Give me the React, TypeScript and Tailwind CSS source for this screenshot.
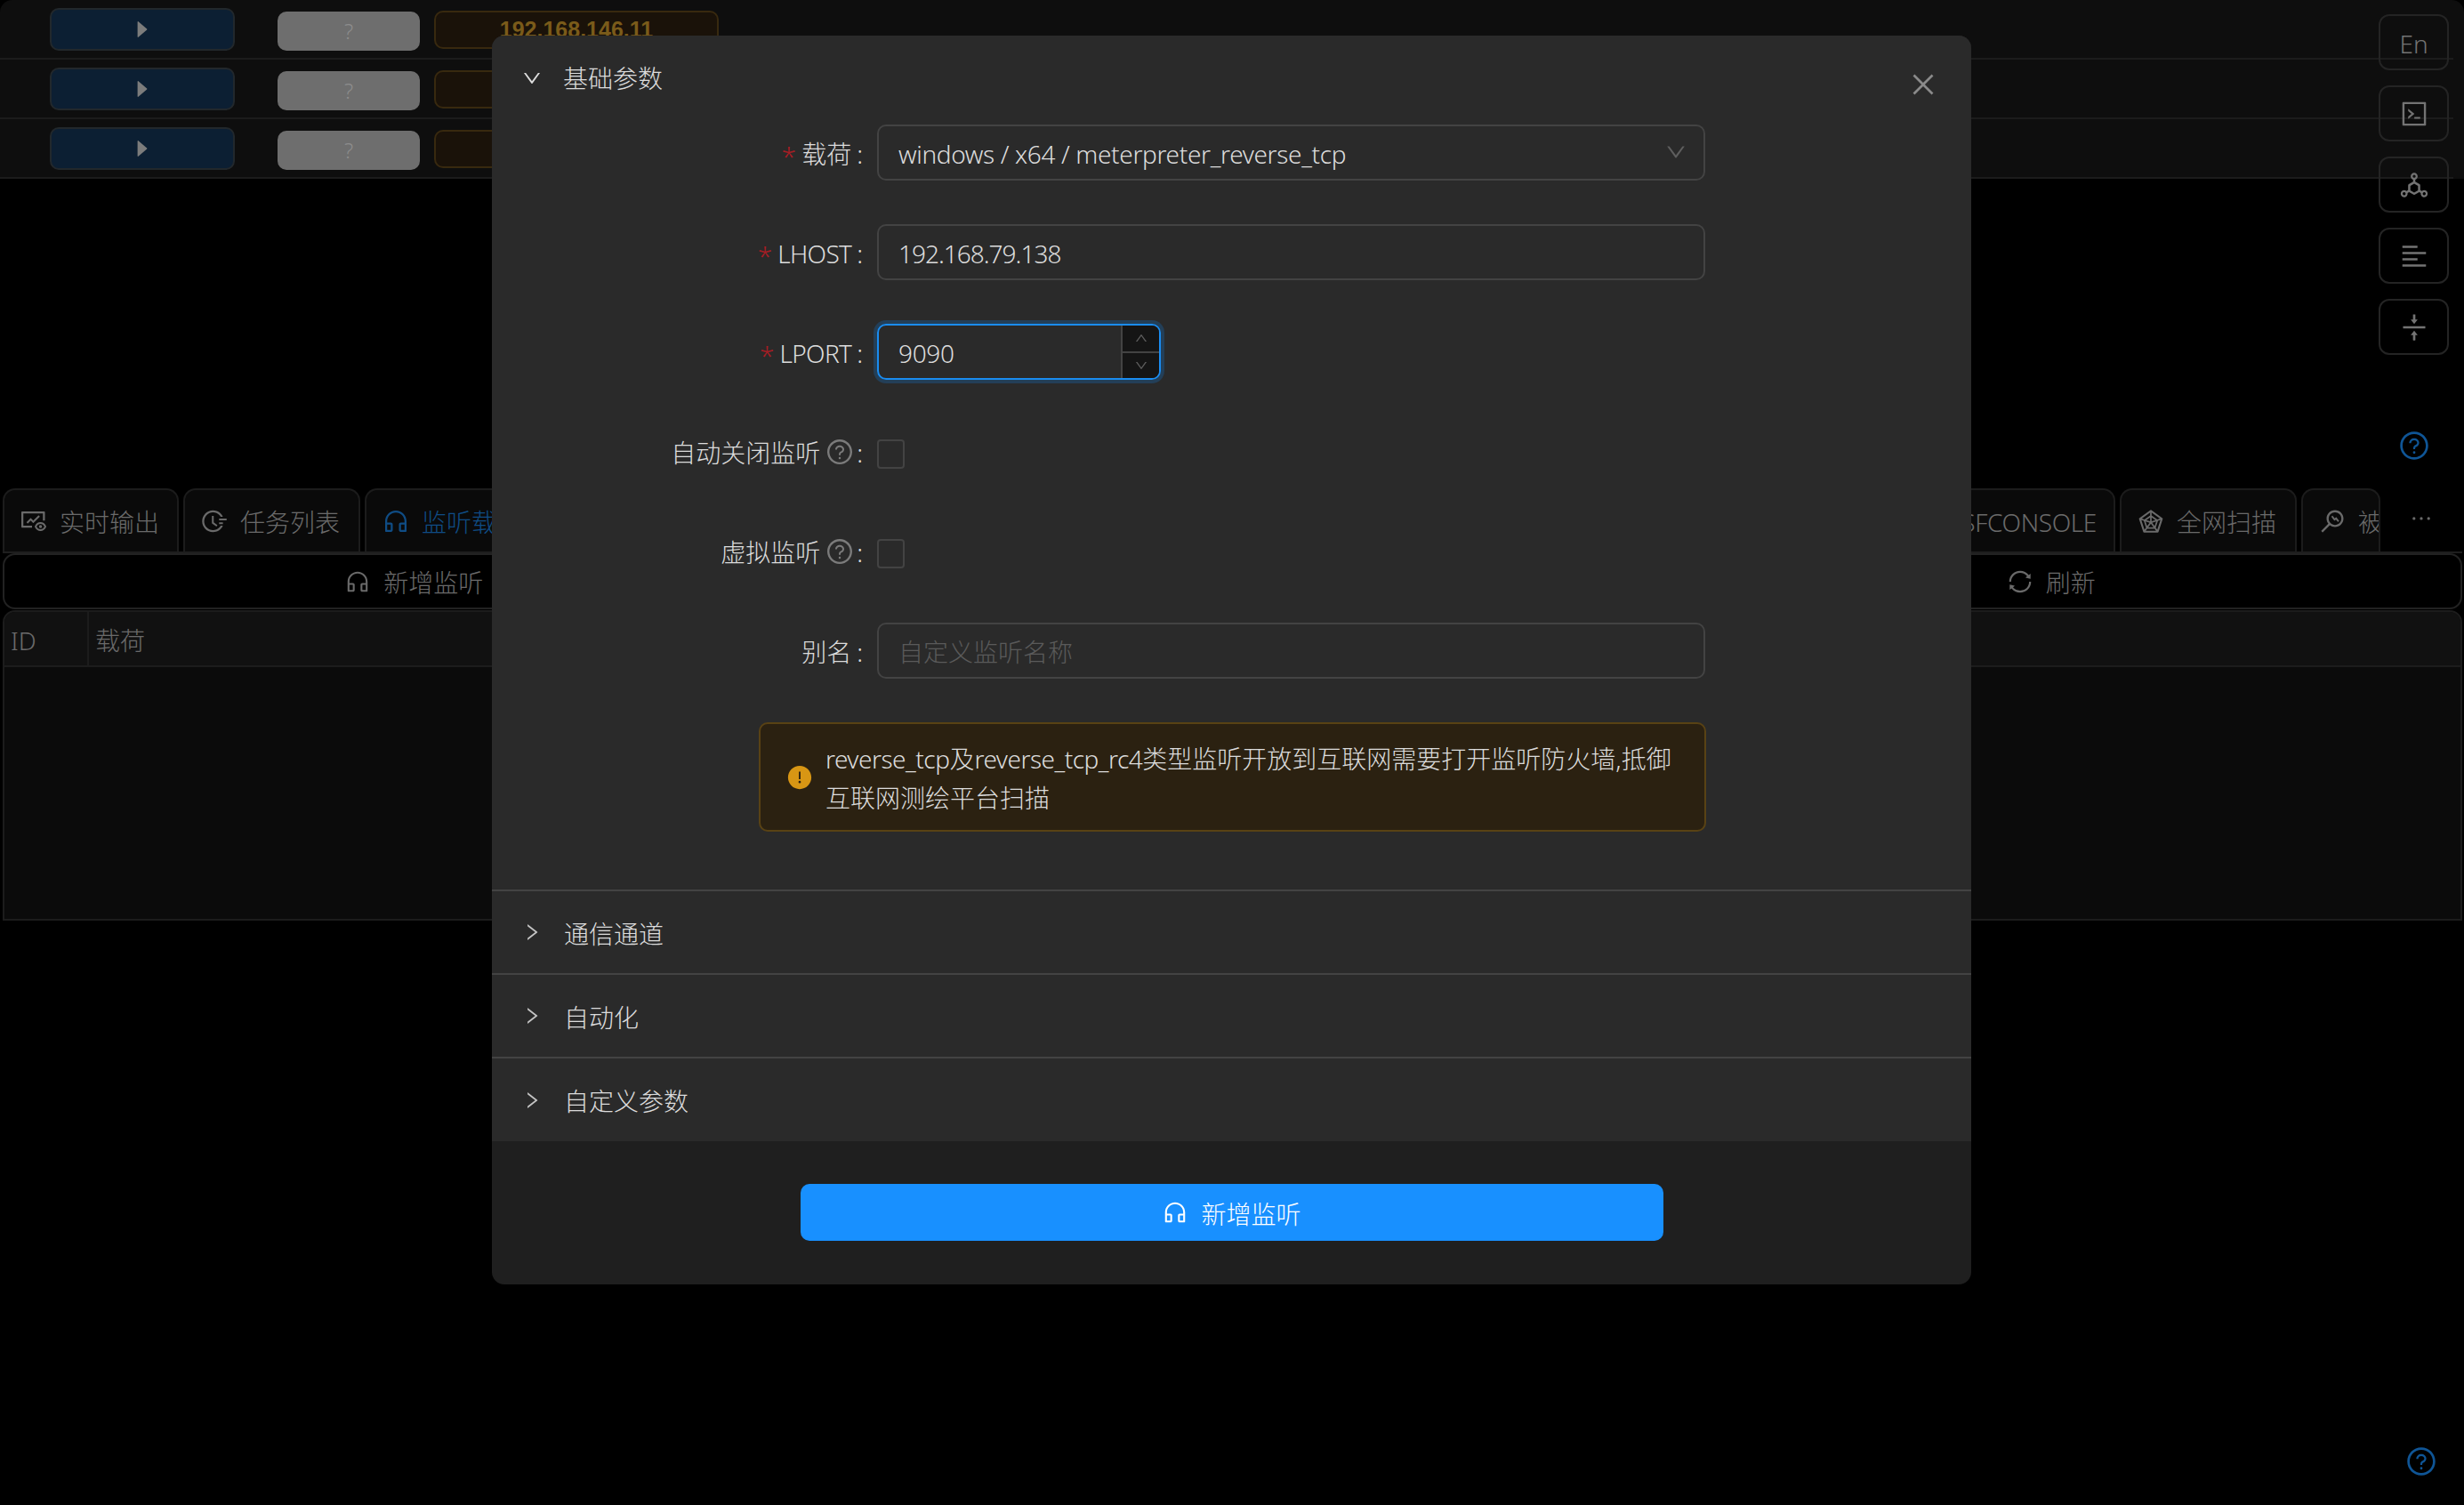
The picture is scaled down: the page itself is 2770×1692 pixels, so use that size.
import React from "react";
import {
  AiOutlineCustomerService, AiOutlineDown, AiOutlineRight, AiOutlineClose, AiOutlineUp,
  AiOutlineQuestionCircle, AiOutlineSync, AiOutlineCode, AiOutlineDeploymentUnit, AiOutlineAlignLeft,
  AiOutlineVerticalAlignMiddle, AiOutlineRadarChart, AiOutlineMonitor, AiOutlineFundView,
  AiOutlineFieldTime, AiFillCaretRight, AiFillExclamationCircle, AiOutlineEllipsis,
} from "react-icons/ai";

const LAT = "tracking-[-0.35px]";
const LAT2 = "tracking-[-0.7px]";
const LAT3 = "tracking-[-1px]";

function BgRow() {
  return (
    <div className="flex items-start h-[67px] border-b-2 border-[#1c1c1c]">
      <div className="ml-[56px] mt-[9px] w-[208px] h-[48px] rounded-[10px] border-2 border-[#22282c] bg-[#0c1f33] flex items-center justify-center">
        <AiFillCaretRight className="text-[26px] text-[#7c7c7c]" />
      </div>
      <div className="ml-[48px] mt-[13px] w-[160px] h-[44px] rounded-[10px] bg-[#6e6e6e] flex items-center justify-center text-[24px] text-[#8c8c8c]">?</div>
      <div className="ml-[16px] mt-[12px] w-[320px] h-[43px] rounded-[10px] border-2 border-[#38290f] bg-[#1a1209] flex items-center justify-center font-['Liberation_Sans',sans-serif] font-bold text-[25px] text-[#7a5b1a]">192.168.146.11</div>
    </div>
  );
}

function Tab({ icon, label, w, active, end, lat }: { icon: React.ReactNode; label: string; w: string; active?: boolean; end?: boolean; lat?: boolean }) {
  return (
    <div className={`${w} shrink-0 h-[71px] rounded-t-[14px] border-2 border-b-0 border-[#1c1c1c] bg-[#0a0a0a] flex items-center gap-[13px] ${end ? "justify-end pr-[19px]" : "pl-[17px]"} overflow-hidden whitespace-nowrap text-[28px] ${active ? "text-[#0f4c84]" : "text-[#6a6a6a]"}`}>
      <span className="text-[32px] flex shrink-0">{icon}</span>
      <span className={`pt-[2px] ${lat ? LAT : ""}`}>{label}</span>
    </div>
  );
}

function SideBtn({ children }: { children: React.ReactNode }) {
  return (
    <div className="w-[79px] h-[63px] rounded-[12px] border-2 border-[#242424] flex items-center justify-center text-[#737373] text-[28px]">
      {children}
    </div>
  );
}

function FormRow({ label, required, help, lat, children }: { label: string; required?: boolean; help?: boolean; lat?: boolean; children: React.ReactNode }) {
  return (
    <div className="flex items-center h-[63px] mb-[49px]">
      <div className="w-[433px] shrink-0 flex items-center justify-end pr-[16px] text-[28px] text-[#dcdcdc]">
        {required && <span className="text-[#a61d24] mr-[6px] text-[30px] leading-none pt-[8px]">*</span>}
        <span className={`pt-[3px] ${lat ? LAT2 : ""}`}>{label}</span>
        {help && <AiOutlineQuestionCircle className="ml-[6px] text-[#7b7b7b] text-[32px]" />}
        <span className={`${help ? "ml-[3px]" : "ml-[6px]"} pt-[3px]`}>:</span>
      </div>
      {children}
    </div>
  );
}

function Input({ value, placeholder, right, tight }: { value?: string; placeholder?: string; right?: React.ReactNode; tight?: boolean }) {
  return (
    <div className="w-[931px] h-[63px] rounded-[10px] border-2 border-[#434343] flex items-center justify-between pl-[22px] pr-[18px] text-[28px]">
      <span className={`pt-[3px] ${value ? `text-[#dcdcdc] ${tight ? LAT3 : LAT}` : "text-[#5a5a5a]"}`}>{value || placeholder}</span>
      {right}
    </div>
  );
}

function Checkbox() {
  return <div className="mt-[5px] w-[31px] h-[33px] rounded-[4px] border-2 border-[#434343]" />;
}

function Section({ label, last }: { label: string; last?: boolean }) {
  return (
    <div className={`flex items-center ${last ? "h-[93px]" : "h-[94px] border-b-2 border-[#434343]"} pl-[33px] text-[28px] text-[#dcdcdc]`}>
      <AiOutlineRight className="text-[24px] text-[#c4c4c4]" />
      <span className="ml-[24px] pt-[3px]">{label}</span>
    </div>
  );
}

export default function App() {
  return (
    <div className="relative w-[2770px] h-[1692px] bg-black overflow-hidden font-['Noto_Sans','Noto_Sans_CJK_SC',sans-serif] font-light">
      <div className="h-[201px] bg-[#0e0e0e] rounded-t-[14px] pr-[12px]">
        <BgRow />
        <BgRow />
        <BgRow />
      </div>

      <div className="mt-[348px] pl-[3px] pr-[2px]">
        <div className="flex gap-[5px] border-b-2 border-[#1e1e1e] h-[73px]">
          <Tab w="w-[198px]" icon={<AiOutlineFundView />} label="实时输出" />
          <Tab w="w-[199px]" icon={<AiOutlineFieldTime />} label="任务列表" />
          <Tab w="w-[205px]" icon={<AiOutlineCustomerService />} label="监听载荷" active />
          <div className="flex-1" />
          <Tab w="w-[280px]" end lat icon={<AiOutlineCode />} label="MSFCONSOLE" />
          <Tab w="w-[199px]" icon={<AiOutlineRadarChart />} label="全网扫描" />
          <Tab w="w-[89px]" icon={<AiOutlineMonitor />} label="被动扫描" />
          <div className="w-[87px] flex items-center justify-center text-[#6a6a6a] text-[30px] pb-[4px] pr-[6px]"><AiOutlineEllipsis /></div>
        </div>
        <div className="grid grid-cols-3 h-[63px] rounded-[14px] border-2 border-[#222222] text-[28px] text-[#6a6a6a]">
          <div className="flex items-center justify-center gap-[14px]"><AiOutlineCustomerService className="text-[30px]" /><span className="pt-[3px]">新增监听</span></div>
          <div />
          <div className="flex items-center justify-center gap-[14px]"><AiOutlineSync className="text-[30px]" /><span className="pt-[3px]">刷新</span></div>
        </div>
        <div className="mt-[1px] h-[349px] rounded-t-[14px] border-2 border-[#1c1c1c] bg-[#0b0b0b] overflow-hidden">
          <div className="flex h-[62px] bg-[#111111] border-b-2 border-[#1c1c1c] text-[28px] text-[#6a6a6a] items-center">
            <div className="w-[95px] h-full border-r-2 border-[#1c1c1c] pl-[7px] pt-[3px] flex items-center">ID</div>
            <div className="pl-[7px] pt-[3px]">载荷</div>
          </div>
        </div>
      </div>

      <div className="absolute top-[16px] left-[2674px] flex flex-col gap-[17px]">
        <SideBtn><span className="pt-[3px]">En</span></SideBtn>
        <SideBtn><AiOutlineCode className="text-[34px]" /></SideBtn>
        <SideBtn><AiOutlineDeploymentUnit className="text-[36px]" /></SideBtn>
        <SideBtn><AiOutlineAlignLeft className="text-[34px]" /></SideBtn>
        <SideBtn><AiOutlineVerticalAlignMiddle className="text-[36px]" /></SideBtn>
      </div>
      <AiOutlineQuestionCircle className="absolute left-[2696px] top-[483px] text-[36px] text-[#0f5596]" />
      <AiOutlineQuestionCircle className="absolute left-[2704px] top-[1625px] text-[36px] text-[#0f5596]" />

      <div className="absolute left-[553px] top-[40px] w-[1663px] h-[1404px] rounded-[14px] bg-[#1f1f1f] overflow-hidden">
        <div className="bg-[#2a2a2a]">
          <div className="flex items-center h-[100px] pb-[4px] pl-[33px] text-[28px] text-[#dcdcdc]">
            <AiOutlineDown className="text-[24px] text-[#dcdcdc]" />
            <span className="ml-[23px]">基础参数</span>
          </div>
          <div>
            <FormRow label="载荷" required>
              <Input value="windows / x64 / meterpreter_reverse_tcp" right={<AiOutlineDown className="text-[26px] text-[#5e5e5e] -mt-[2px]" />} />
            </FormRow>
            <FormRow label="LHOST" required lat><Input tight value="192.168.79.138" /></FormRow>
            <FormRow label="LPORT" required lat>
              <div className="w-[319px] h-[63px] rounded-[10px] border-2 border-[#1a8cf0] shadow-[0_0_0_4px_#233f58] flex overflow-hidden text-[28px] text-[#dcdcdc]">
                <div className={`flex-1 flex items-center pl-[22px] pt-[3px] ${LAT}`}>9090</div>
                <div className="w-[43px] bg-[#151515] border-l-2 border-[#434343] flex flex-col text-[#5e5e5e] text-[16px]">
                  <div className="flex-1 flex items-center justify-center border-b-2 border-[#434343]"><AiOutlineUp /></div>
                  <div className="flex-1 flex items-center justify-center"><AiOutlineDown /></div>
                </div>
              </div>
            </FormRow>
            <FormRow label="自动关闭监听" help><Checkbox /></FormRow>
            <FormRow label="虚拟监听" help><Checkbox /></FormRow>
            <FormRow label="别名"><Input placeholder="自定义监听名称" /></FormRow>
          </div>
          <div className="ml-[300px] w-[1065px] h-[123px] rounded-[10px] border-2 border-[#594214] bg-[#2b2111] flex items-center pl-[29px] pr-[20px] mb-[65px]">
            <AiFillExclamationCircle className="text-[30px] text-[#d89614] shrink-0" />
            <div className="ml-[14px] pt-[3px] text-[28px] leading-[44px] text-[#dcdcdc]">
              <span className="tracking-[-0.5px]">reverse_tcp</span>及<span className="tracking-[-0.5px]">reverse_tcp_rc4</span>类型监听开放到互联网需要打开监听防火墙,抵御互联网测绘平台扫描
            </div>
          </div>
          <div className="border-t-2 border-[#434343]">
            <Section label="通信通道" />
            <Section label="自动化" />
            <Section label="自定义参数" last />
          </div>
        </div>
        <div className="pt-[48px] flex justify-center">
          <div className="w-[970px] h-[64px] rounded-[10px] bg-[#1890ff] flex items-center justify-center gap-[14px] text-[28px] text-white">
            <AiOutlineCustomerService className="text-[30px]" />
            <span className="pt-[3px]">新增监听</span>
          </div>
        </div>
      </div>

      <AiOutlineClose className="absolute left-[2145px] top-[78px] text-[34px] text-[#8a8a8a]" />
    </div>
  );
}
